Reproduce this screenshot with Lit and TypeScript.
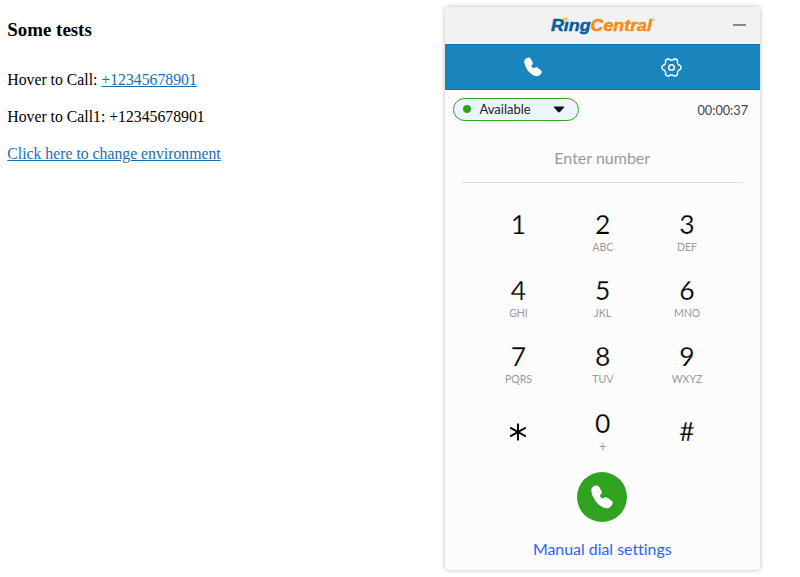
import { LitElement, html, css, svg } from "lit";
import { customElement } from "lit/decorators.js";

const handset = svg`<path fill="#fff" d="M.3 5C.2 3 2 .8 4.6.3 6.2 0 7.600.6 8.400 2l2.300 4.200c.6 1.400-.2 2.400-1.200 3.300-.8.8-.4 1.600.4 2.700.8 1 1.700 1.300 2.700.5s2.600-1.100 3.800-.2l4.200 3.100c1.400 1.100 1.400 2.700.4 4.100-1.800 2.600-4 3.900-6.800 3.200C6.800 20.600.8 12.500.3 5Z"/>`;

const gearPoints = Array.from({ length: 120 }, (_, i) => {
  const a = (i * Math.PI) / 60;
  const c = Math.cos(6 * a);
  const r = 8.05 + 1.05 * Math.tanh(1.5 * c);
  return `${(10 + r * Math.cos(a)).toFixed(2)},${(10 + r * Math.sin(a)).toFixed(2)}`;
}).join(" ");

const keys: [string, string][] = [
  ["1", ""], ["2", "ABC"], ["3", "DEF"],
  ["4", "GHI"], ["5", "JKL"], ["6", "MNO"],
  ["7", "PQRS"], ["8", "TUV"], ["9", "WXYZ"],
  ["*", ""], ["0", "+"], ["#", ""],
];

@customElement("dial-key")
class DialKey extends LitElement {
  static properties = { label: {}, letters: {} };
  declare label: string;
  declare letters: string;
  static styles = css`
    :host { display: flex; flex-direction: column; align-items: center; height: 66.200px; }
    .label { font-size: 26.500px; line-height: 30px; height: 30px; color: #000;
      -webkit-text-stroke: .25px #fcfcfc; }
    .letters { font-size: 10.500px; line-height: 14px; margin-top: 1px; color: #999; }
    .plus { font-size: 13px; }
    svg { margin-top: 15.500px; }
    .hash { padding-top: 8px; }
  `;
  render() {
    if (this.label === "*")
      return html`<svg width="18" height="18" viewBox="0 0 18 18" stroke="#000" stroke-width="1.900">
        <path d="M9 .5v17M1.200 4.700l15.600 8.600M16.800 4.700L1.200 13.300" /></svg>`;
    return html`<span class="label ${this.label === "#" ? "hash" : ""}">${this.label}</span>
      <span class="letters ${this.letters === "+" ? "plus" : ""}">${this.letters}</span>`;
  }
}

@customElement("app-root")
class AppRoot extends LitElement {
  static styles = css`
    * { box-sizing: border-box; }
    :host { display: flex; height: 577px; overflow: hidden; background: #fff; }
    .page { width: 444.500px; padding: 19px 0 0 7.300px; color: #000;
      font: 15.750px/18px "Liberation Serif", serif; }
    h3 { margin: 0 0 30px; font-size: 18.900px; line-height: 22px; }
    p { margin: 0 0 19px; height: 18px; }
    .page a { color: #176fb4; text-decoration: underline; }
    .panel { width: 315.500px; height: 563px; margin-top: 7px; background: #fcfcfc;
      border-radius: 4px; box-shadow: 0 0 5px rgba(0,0,0,.27); overflow: hidden;
      font-family: Lato, sans-serif; font-variant-ligatures: none; display: flex; flex-direction: column; }
    .title { height: 37px; background: #f2f2f2; display: flex; align-items: center;
      justify-content: space-between; padding: 0 14.500px 2px 105px; }
    .logo { font: italic 700 17px "Liberation Sans", sans-serif; }
    .min { width: 13px; height: 2px; background: #888; }
    .tabs { height: 46px; background: #1a84bd; border: solid #0b76b4; border-width: 1px 0;
      display: grid; grid-template-columns: 177px 100px; align-items: center; justify-items: center; }
    .status { height: 38px; display: flex; justify-content: space-between;
      align-items: center; padding: 0 12px 0 8.500px; }
    .pill { width: 126px; height: 23px; border: 1px solid #2ea31e; border-radius: 12px;
      background: #edf5fc; display: flex; align-items: center; padding: 0 13px 1px 8.500px;
      font-size: 13px; color: #222; }
    .dot { width: 8px; height: 8px; border-radius: 50%; background: #2ba51c; margin-right: 9px; }
    .arrow { margin: 2px 0 0 auto; }
    .time { font-size: 12.700px; color: #444; padding-top: 1px; }
    .number { height: 55px; margin: 0 17px; border-bottom: 1px solid #dcdcdc; text-align: center;
      font-size: 16px; line-height: 60px; color: #999; }
    .pad { display: grid; grid-template-columns: repeat(3, 84.300px); justify-content: center;
      padding: 26px 0 0 1px; }
    .call { width: 50px; height: 50px; border-radius: 50%; background: #2fa31f; margin: -2px auto 0;
      flex: none; display: flex; align-items: center; justify-content: center; }
    .manual { text-align: center; font-size: 15.900px; line-height: 20px; margin-top: 17px; color: #2962ff; }
  `;
  render() {
    return html`
      <main class="page">
        <h3>Some tests</h3>
        <p>Hover to Call: <a>+12345678901</a></p>
        <p>Hover to Call1: +12345678901</p>
        <p><a>Click here to change environment</a></p>
      </main>
      <section class="panel">
        <header class="title">
          <svg class="logo" width="106" height="24" viewBox="0 0 106 24">
            <text x="1" y="18" textLength="101" lengthAdjust="spacingAndGlyphs" stroke-width=".5"
              fill="#075e9e" stroke="#075e9e">Rıng<tspan fill="#f88b13" stroke="#f88b13">Central</tspan></text>
            <g fill="none" stroke="#f88b13" stroke-width=".9">
              <path d="M13.200 6.200q2.600-2.800 5 0M14.400 7.600q1.300-1.500 2.600 0" />
              <circle cx="103.700" cy="6.500" r="1" stroke-width=".4" />
            </g>
          </svg>
          <span class="min"></span>
        </header>
        <nav class="tabs">
          <svg width="18" height="20" viewBox="0 0 22 23.500">${handset}</svg>
          <svg width="21" height="21" viewBox="0 0 20 20" fill="none" stroke="#fff" stroke-width="1.450">
            <polygon points=${gearPoints} stroke-linejoin="round" /><circle cx="10" cy="10" r="2.700" />
          </svg>
        </nav>
        <div class="status">
          <div class="pill"><span class="dot"></span>Available
            <svg class="arrow" width="12" height="7" viewBox="0 0 12 7"><path d="M1.500.5h9c.8 0 1 .6.5 1.100L7 6c-.6.600-1.400.600-2 0L1 1.600C.5 1.100.7.5 1.500.5Z" fill="#111" /></svg>
          </div>
          <span class="time">00:00:37</span>
        </div>
        <div class="number">Enter number</div>
        <div class="pad">
          ${keys.map(([l, s]) => html`<dial-key .label=${l} .letters=${s}></dial-key>`)}
        </div>
        <div class="call"><svg width="22" height="24" viewBox="0 0 22 23.500">${handset}</svg></div>
        <div class="manual">Manual dial settings</div>
      </section>
    `;
  }
}
